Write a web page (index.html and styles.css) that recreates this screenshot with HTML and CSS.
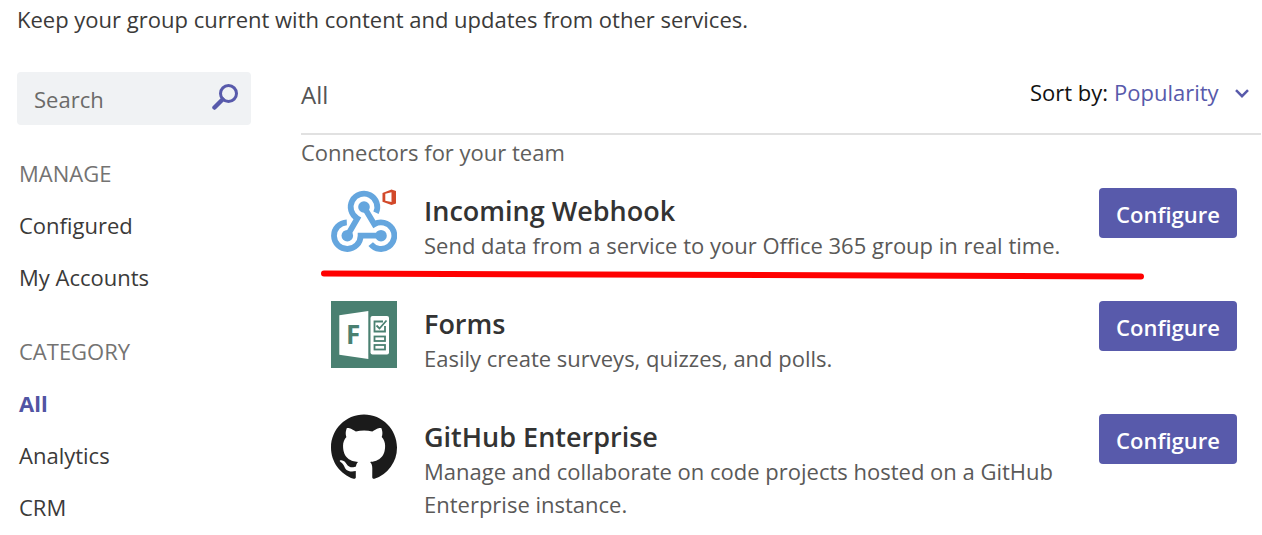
FILE: index.html
```html
<!DOCTYPE html>
<html lang="en">
<head>
<meta charset="utf-8">
<title>Connectors</title>
<link rel="stylesheet" href="styles.css">
</head>
<body>
<p class="intro">Keep your group current with content and updates from other services.</p>
<div class="layout">
  <aside class="sidebar">
    <form class="search" role="search">
      <input class="search-input" type="search" placeholder="Search" aria-label="Search">
      <button class="search-button" type="submit" aria-label="Search">
        <svg width="26" height="26" viewBox="0 0 26 26" fill="none" stroke="currentColor"><circle cx="16.500" cy="9.500" r="8" stroke-width="3"/><path d="M10.500 15.500 2.500 23.500" stroke-width="4.500" stroke-linecap="round"/></svg>
      </button>
    </form>
    <nav class="nav">
      <section>
        <h2 class="nav-title">MANAGE</h2>
        <a class="nav-link" href="#configured">Configured</a>
        <a class="nav-link" href="#accounts">My Accounts</a>
      </section>
      <section>
        <h2 class="nav-title">CATEGORY</h2>
        <a class="nav-link active" href="#all" aria-current="page">All</a>
        <a class="nav-link" href="#analytics">Analytics</a>
        <a class="nav-link" href="#crm">CRM</a>
      </section>
    </nav>
  </aside>
  <main class="main">
    <header class="main-head">
      <h1 class="heading">All</h1>
      <div class="sort">
        <label for="sort">Sort by:</label>
        <span class="select-wrap">
          <select id="sort" class="select"><option>Popularity</option></select>
          <svg class="chevron" width="14" height="9" viewBox="0 0 14 9" fill="none" stroke="currentColor" stroke-width="2.500"><path d="M1 1.200 7 7.200 13 1.200"/></svg>
        </span>
      </div>
    </header>
    <h2 class="subheading">Connectors for your team</h2>
    <ul class="list">
      <li class="item">
        <svg class="logo" viewBox="0 0 66 67" aria-hidden="true">
          <g fill="none" stroke="#65a6de" stroke-width="5.800">
            <path d="M45 24.700A13.300 13.300 0 1 0 26.300 30.500L16.300 47.700"/>
            <path d="M33 19 43.300 36.200A13.300 13.300 0 1 1 39.700 56.100"/>
            <path d="M50 47.700H29.600A13.300 13.300 0 1 1 15.800 34.400"/>
          </g>
          <g fill="#65a6de"><circle cx="33" cy="19" r="5.800"/><circle cx="16.300" cy="47.700" r="5.800"/><circle cx="50" cy="47.700" r="5.800"/></g>
          <path fill="#d2492a" fill-rule="evenodd" d="M51.500 5 60.500 1.500 65 3V15.500L60.500 17 51.500 13.800ZM54.300 5.700V12.800L60.500 14V4.200Z"/>
        </svg>
        <div class="item-text"><h3 class="item-title">Incoming Webhook</h3><p class="item-desc">Send data from a service to your Office 365 group in real time.</p></div>
        <button class="configure" type="button">Configure</button>
        <svg class="underline" viewBox="0 0 823 10" preserveAspectRatio="none" aria-hidden="true"><path d="M3 3.500 820 6.500" fill="none" stroke="#ff0000" stroke-width="6" stroke-linecap="round"/></svg>
      </li>
      <li class="item">
        <svg class="logo" viewBox="0 0 66 67" aria-hidden="true">
          <rect width="66" height="67" fill="#4a8071"/>
          <path fill="#fff" d="M8.300 14.300 37.300 10V58L8.300 53.700Z"/>
          <text class="logo-letter" x="15" y="43">F</text>
          <rect x="39.500" y="15" width="18.500" height="38.500" rx="2" fill="#fff"/>
          <g fill="none" stroke="#4a8071" stroke-width="1.800">
            <path d="M52 20.500H43.500V30.500H54V25"/><path d="M45.500 24.500 48.500 27.500 55.500 19.500"/>
            <rect x="43.500" y="35.500" width="10.500" height="4.500"/><rect x="43.500" y="44" width="10.500" height="4.500"/>
          </g>
        </svg>
        <div class="item-text"><h3 class="item-title">Forms</h3><p class="item-desc">Easily create surveys, quizzes, and polls.</p></div>
        <button class="configure" type="button">Configure</button>
      </li>
      <li class="item">
        <svg class="logo" viewBox="0 0 16 16" aria-hidden="true"><path fill="#1b1b1b" d="M8 0C3.580 0 0 3.580 0 8c0 3.540 2.290 6.530 5.470 7.590.4.070.55-.17.55-.38 0-.19-.01-.82-.01-1.490-2.010.37-2.530-.49-2.690-.94-.09-.23-.48-.94-.82-1.130-.28-.15-.68-.52-.01-.53.63-.01 1.080.58 1.230.82.72 1.210 1.870.87 2.330.66.07-.52.28-.87.51-1.070-1.780-.2-3.640-.89-3.640-3.950 0-.87.31-1.590.82-2.150-.08-.2-.36-1.020.08-2.120 0 0 .67-.21 2.200.82.64-.18 1.320-.27 2-.27.68 0 1.360.09 2 .27 1.530-1.040 2.200-.82 2.200-.82.44 1.100.16 1.920.08 2.120.51.56.82 1.270.82 2.150 0 3.070-1.870 3.750-3.650 3.950.29.25.54.73.54 1.480 0 1.070-.01 1.930-.01 2.200 0 .21.15.46.55.38A8.013 8.013 0 0 0 16 8c0-4.420-3.580-8-8-8z"/></svg>
        <div class="item-text"><h3 class="item-title">GitHub Enterprise</h3><p class="item-desc">Manage and collaborate on code projects hosted on a GitHub Enterprise instance.</p></div>
        <button class="configure" type="button">Configure</button>
      </li>
    </ul>
  </main>
</div>
</body>
</html>
```
FILE: styles.css
```css
* { box-sizing: border-box; }
body {
  margin: 0;
  padding: 4px 1px 0 17px;
  background: #fff;
  color: #3b3a39;
  font: 22px/30px "Segoe UI", "Open Sans", "Noto Sans", sans-serif;
}
h1, h2, h3, p, ul { margin: 0; padding: 0; font-size: inherit; font-weight: 400; }
button, input, select { font: inherit; }

.intro { margin-bottom: 38px; }
.layout { display: flex; gap: 50px; }

.sidebar { flex: 0 0 234px; min-width: 0; }
.search {
  display: flex;
  align-items: center;
  height: 53px;
  padding: 0 13px 0 17px;
  border-radius: 4px;
  background: #f0f2f4;
}
.search-input {
  flex: 1;
  width: 100%;
  min-width: 0;
  padding: 0;
  border: 0;
  outline: 0;
  background: transparent;
  appearance: none;
}
.search-input::placeholder { color: #6b6a69; opacity: 1; }
.search-button {
  display: flex;
  padding: 0 0 4px;
  border: 0;
  background: none;
  color: #585aab;
}
.nav { display: grid; gap: 22px; padding: 22px 2px 0; }
.nav-title, .nav-link { display: block; line-height: 52px; }
.nav-title { color: #747372; }
.nav-link { color: #3b3a39; text-decoration: none; }
.nav-link.active { color: #5254a3; font-weight: 700; }

.main { flex: 1; min-width: 0; }
.main-head {
  display: flex;
  justify-content: space-between;
  height: 63px;
  padding-top: 5px;
  border-bottom: 2px solid #e1e1e1;
}
.heading { padding-top: 3px; color: #555; font-size: 24px; }
.sort { display: flex; gap: 6px; padding-right: 12px; color: #111; }
.select-wrap { position: relative; height: 30px; color: #585aab; }
.select {
  height: 30px;
  padding: 0 30px 0 0;
  border: 0;
  background: transparent;
  color: inherit;
  appearance: none;
}
.chevron { position: absolute; right: 0; top: 12px; pointer-events: none; }
.subheading { padding: 2px 0 21px; color: #605e5c; }

.list { list-style: none; }
.item {
  position: relative;
  display: flex;
  align-items: flex-start;
  min-height: 113px;
  padding: 0 24px 0 30px;
}
.logo { flex: none; width: 66px; height: 67px; margin-right: 27px; }
.logo-letter { fill: #4a8071; font-size: 26px; font-weight: 700; }
.item-text { flex: 1; min-width: 0; padding: 4px 12px 0 0; }
.item-title { color: #333; font-size: 27px; font-weight: 600; line-height: 37px; }
.item-desc { color: #5a5958; line-height: 33px; }
.configure {
  flex: 0 0 138px;
  height: 50px;
  padding: 2px 0 0;
  border: 0;
  border-radius: 4px;
  background: #585aab;
  color: #fff;
  font-weight: 600;
}
.underline {
  position: absolute;
  top: 82px;
  left: 20px;
  width: calc(100% - 137px);
  height: 10px;
}
```
